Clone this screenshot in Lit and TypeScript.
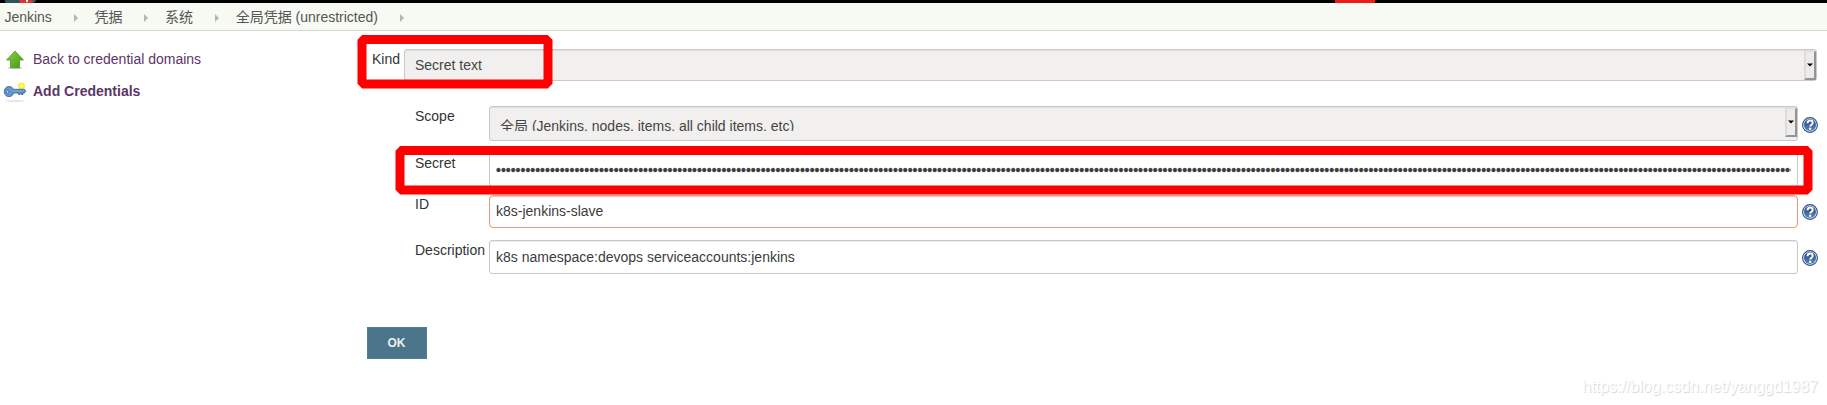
import { LitElement, html, css } from "lit";
import { customElement, property } from "lit/decorators.js";

@customElement("help-icon")
class HelpIcon extends LitElement {
  static styles = css`:host{display:block;width:16px;height:16px;flex:none}svg{display:block}`;
  render() {
    return html`<svg width="16" height="16" viewBox="0 0 16 16">
      <defs><linearGradient id="g" x1="0" y1="0" x2="0" y2="1"><stop offset="0" stop-color="#24467f"/><stop offset="1" stop-color="#5c84bb"/></linearGradient></defs>
      <circle cx="8" cy="8" r="7.4" fill="#e3eaf4" stroke="#2c5089" stroke-width="1.1"/>
      <circle cx="8" cy="8" r="6" fill="url(#g)"/>
      <path d="M5.5 6.2C5.6 4.4 6.6 3.5 8.1 3.5S10.7 4.5 10.7 5.9C10.7 7.6 8.2 7.7 8.2 9.6" fill="none" stroke="#fff" stroke-width="1.9"/>
      <rect x="7.1" y="10.7" width="2.1" height="2.1" fill="#fff"/>
    </svg>`;
  }
}

@customElement("select-box")
class SelectBox extends LitElement {
  @property() value = "";
  static styles = css`
    :host{display:flex;box-sizing:border-box;border:1px solid #c9c9c9;border-radius:3px;background:#f1f0ee;color:#444;box-shadow:inset 0 1px 1px rgba(0,0,0,.08);padding:1px 0 0 10px;justify-content:space-between}
    .text{height:var(--clip,29px);overflow:hidden;line-height:16px;padding-top:var(--top,5px);box-sizing:border-box;white-space:nowrap}
    .button{width:12px;height:29px;box-sizing:border-box;background:#edeceb;border:solid;border-width:1px 2px 2px 2px;border-color:#e0dfdd #949494 #949494 #dddcda;display:flex;align-items:center;justify-content:center}
    svg{display:block}
  `;
  render() {
    return html`<div class="text">${this.value}</div><div class="button"><svg width="6" height="4"><path d="M0 .5H6L3 3.5Z" fill="#000"/></svg></div>`;
  }
}

@customElement("app-root")
class AppRoot extends LitElement {
  static styles = css`
    :host{display:block;position:relative;height:405px;overflow:hidden;background:#fff;color:#333;font:14px/16px "Liberation Sans","Noto Sans CJK SC",sans-serif}
    .top{height:3px;background:#000;display:flex;padding-left:5px}
    .top svg{display:block}
    .alert{width:40px;background:#ef1a1a;margin-left:1299px}
    .crumbs{height:28px;box-sizing:border-box;border-bottom:1px solid #d3d7cf;background:#f6faf2;display:flex;align-items:center;padding:1px 0 0 4.4px;color:#555}
    .crumbs span{white-space:nowrap}
    .crumbs svg{width:4px;height:8px;margin:1px 16.6px 0 22px;flex:none}
    .body{display:flex}
    .side{width:367px;padding-top:20px;box-sizing:border-box}
    .task{display:flex;height:32px;color:#5c3566}
    .task svg{width:24px;height:24px;margin:-3px 6px 0 3px;flex:none}
    .bold{font-weight:bold}
    .form{width:1460px}
    .row{display:flex;box-sizing:border-box}
    .kind{padding:18px 0 0 5px;height:75px}
    .kind .label{width:32px;padding-top:2px}
    .kind select-box{width:1413px;height:32px;--top:6px}
    .field{padding-left:48px}
    .field .label{width:74px}
    .scope{height:46px}
    .scope .label{padding-top:2px}
    .scope select-box{width:1309px;height:35px;--top:10px;--clip:23px}
    .secret{height:43px}
    .secret .label{padding-top:3px}
    .id .label{padding-top:1px}
    .id{height:45px}
    .desc{height:87px}
    .desc .label{padding-top:2px}
    .input{width:1309px;height:34px;box-sizing:border-box;border:1px solid #c9c9c9;border-radius:3px;padding:0 6px;line-height:32px;overflow:hidden;box-shadow:inset 0 1px 1px rgba(0,0,0,.08);white-space:nowrap;color:#3c3c3c}
    .secret .input{height:35px}
    .id .input{height:33px;border-color:#e59b7c;line-height:31px;border-radius:4px;box-shadow:inset 0 1px 1px #f0c3b0}
    .dots{overflow:hidden;height:33px;line-height:34px;-webkit-text-stroke:.35px #3c3c3c}
    help-icon{margin:11px 0 0 4px}
    .id help-icon{margin-top:9px}
    .desc help-icon{margin-top:10px}
    .ok{width:60px;height:32px;box-sizing:border-box;background:#4b758b;border:1px solid #4a8199;color:#eee;font:bold 12px/30px "Liberation Sans",sans-serif;text-align:center;padding-right:1px}
    .marker{position:absolute;left:0;top:0;pointer-events:none}
    .mark{position:absolute;right:9px;bottom:8px;font-size:16px;line-height:20px;color:#fff;text-shadow:1px 1px 1px #d6d6d6}
  `;
  arrow() { return html`<svg viewBox="0 0 4 8"><path d="M0 0L4 4L0 8Z" fill="#b4b6b2"/></svg>`; }
  render() {
    return html`
      <div class="top"><svg width="31" height="3"><path d="M0 0H31V1L29 3H1L0 2Z" fill="#335061"/><path d="M14 0H28V2L26 3H15Z" fill="#d33833"/><path d="M21 0H23V2H21Z" fill="#eee"/></svg><div class="alert"></div></div>
      <div class="crumbs">${["Jenkins", "凭据", "系统", "全局凭据 (unrestricted)"].map(t => html`<span>${t}</span>${this.arrow()}`)}</div>
      <div class="body">
        <div class="side">
          <div class="task"><svg viewBox="0 0 24 24"><defs><linearGradient id="a" x2="1" y2="1"><stop stop-color="#8fd044"/><stop offset="1" stop-color="#419a10"/></linearGradient></defs><ellipse cx="12" cy="20" rx="7" ry="1" fill="#bbb"/><path d="M12 3L20.5 12H16.5V19.5H7.5V12H3.5Z" fill="url(#a)" stroke="#4b9b21" stroke-width=".8"/></svg><span>Back to credential domains</span></div>
          <div class="task bold"><svg viewBox="0 0 24 24"><ellipse cx="12" cy="21" rx="10" ry="1" fill="#e6e6e6"/><circle cx="18.5" cy="6" r="2.6" fill="#fff9a0" stroke="#ffed43" stroke-width="2"/><path d="M6 6.5C8.3 6.5 9.8 7.8 10.5 9.3H21.5L22.8 11.2L21.5 13H20V14.5H18.5V13H17V14.5H15.5V13H10.7C10 15.3 8.4 16.6 6 16.6C3 16.6 1.3 14.3 1.3 11.6S3 6.5 6 6.5Z" fill="#6495cb" stroke="#3c6aa5" stroke-width=".9"/><ellipse cx="4.3" cy="11.7" rx="1" ry="1.6" fill="#fff" stroke="#3c6aa5"/><path d="M10 11H21" stroke="#7ea7d5"/></svg><span>Add Credentials</span></div>
        </div>
        <div class="form">
          <div class="row kind"><div class="label">Kind</div><select-box value="Secret text"></select-box></div>
          <div class="row field scope"><div class="label">Scope</div><select-box value="全局 (Jenkins, nodes, items, all child items, etc)"></select-box><help-icon></help-icon></div>
          <div class="row field secret"><div class="label">Secret</div><div class="input"><div class="dots">${"•".repeat(280)}</div></div></div>
          <div class="row field id"><div class="label">ID</div><div class="input">k8s-jenkins-slave</div><help-icon></help-icon></div>
          <div class="row field desc"><div class="label">Description</div><div class="input">k8s namespace:devops serviceaccounts:jenkins</div><help-icon></help-icon></div>
          <div class="ok">OK</div>
        </div>
      </div>
      <svg class="marker" width="1827" height="405" fill="none" stroke="#f00" stroke-width="9"><path d="M364 39.5H546L548 41.5V82L546 84H364L362 82V41.5Z"/><path d="M402 150.5H1806L1808 152.5V188L1806 190H402L400 188V152.5Z"/></svg>
      <div class="mark">https://blog.csdn.net/yanggd1987</div>`;
  }
}
